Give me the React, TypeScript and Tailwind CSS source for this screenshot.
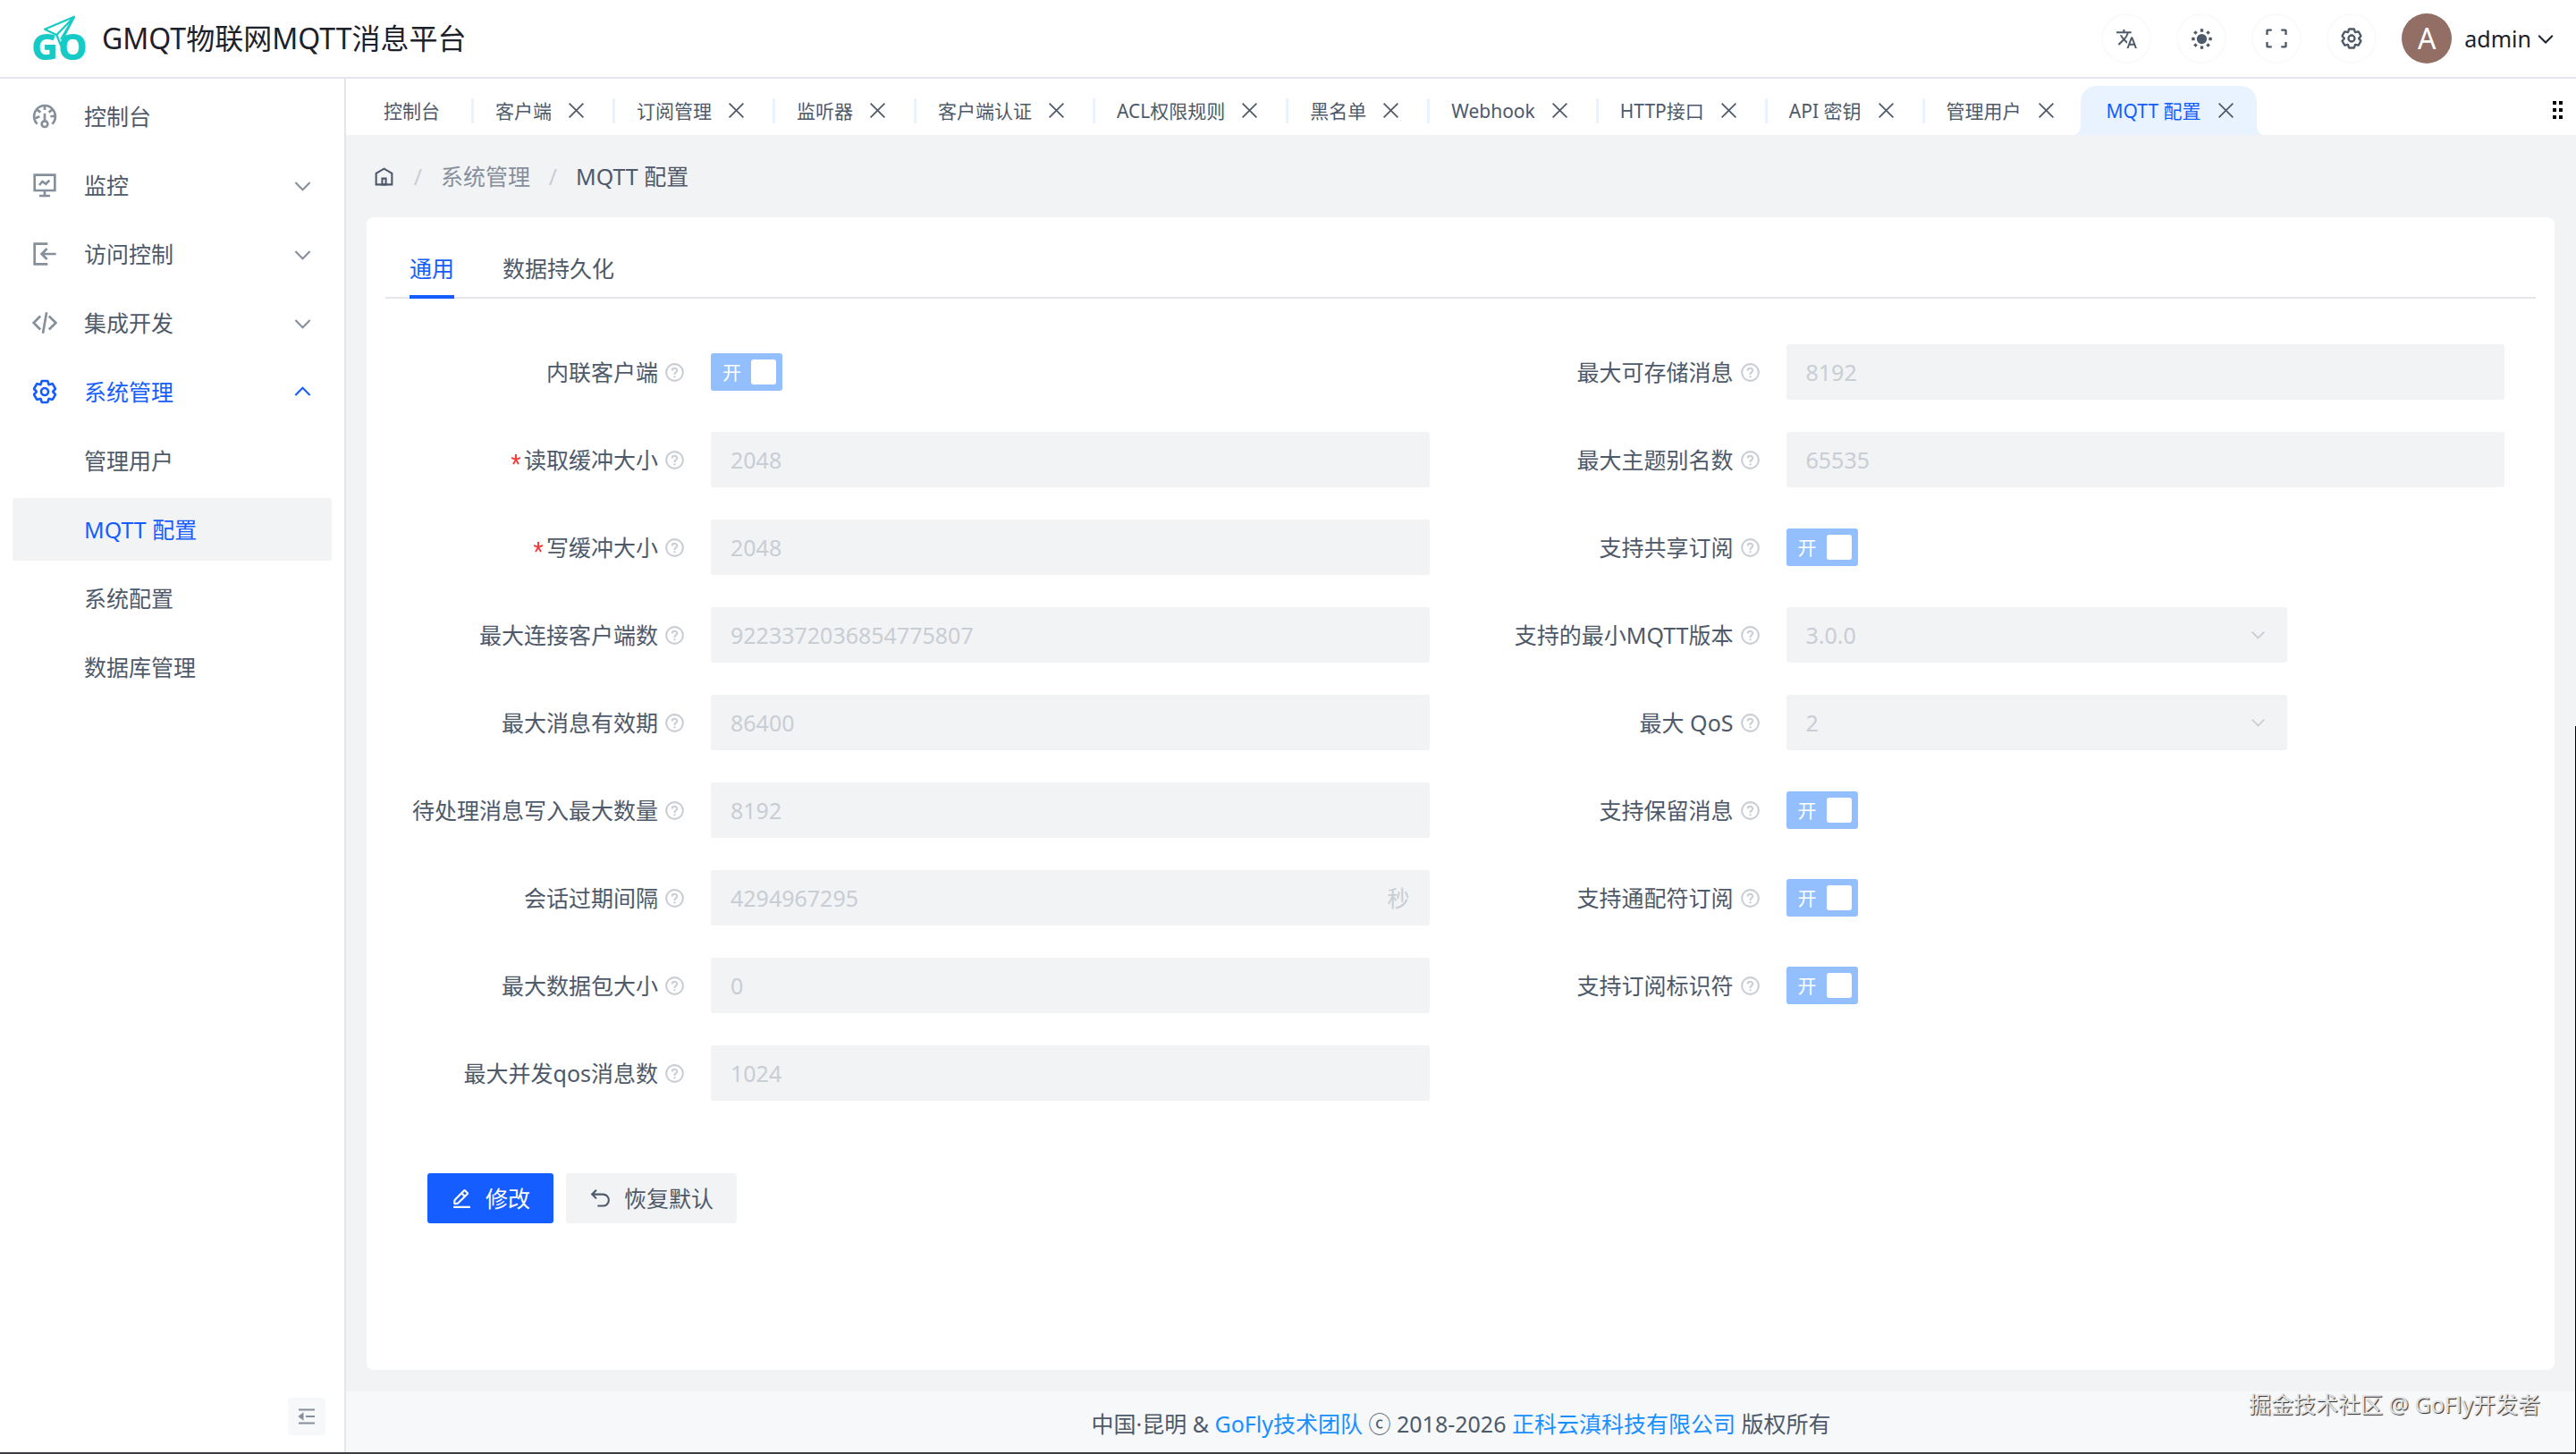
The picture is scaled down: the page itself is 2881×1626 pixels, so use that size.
import { useState, type ReactNode } from 'react'
import { clsx } from 'clsx'
import { MdTranslate } from 'react-icons/md'

type IconProps = { className?: string; children?: ReactNode; strokeWidth?: number }

const Icon = ({ className, children, strokeWidth = 4 }: IconProps) => (
  <svg
    viewBox="0 0 48 48"
    fill="none"
    stroke="currentColor"
    strokeWidth={strokeWidth}
    className={clsx('shrink-0', className)}
    aria-hidden="true"
  >
    {children}
  </svg>
)

const DashboardIcon = ({ className }: IconProps) => (
  <Icon className={className}>
    <path d="M41.808 24c.118 4.63-1.486 9.333-5.21 13m5.21-13h-8.309m8.309 0c-.112-4.38-1.767-8.694-4.627-12M24 6c5.531 0 10.07 2.404 13.18 6M24 6c-5.724 0-10.384 2.574-13.5 6.38M24 6v7.5M37.18 12 31 17.5m-20.5-5.12L17 17.5m-6.5-5.12C6.99 16.662 5.44 22.508 6.53 28m4.872 9c-2.65-2.609-4.226-5.742-4.873-9m0 0 8.97-3.5" />
    <path d="M24 32a5 5 0 1 0 0 10 5 5 0 0 0 0-10Zm0 0V19" />
  </Icon>
)

const MonitorIcon = ({ className }: IconProps) => (
  <Icon className={className}>
    <path d="M24 34v8m0 0h-9m9 0h9M7 7h34v26H7zM15 24l5-6 6 4 6-6" />
  </Icon>
)

const ImportIcon = ({ className }: IconProps) => (
  <Icon className={className}>
    <path d="m27.929 33.072-9.071-9.07 9.07-9.072M43 24H19m10 17H7V7h22" />
  </Icon>
)

const CodeIcon = ({ className }: IconProps) => (
  <Icon className={className}>
    <path d="M16.734 12.686 5.42 24l11.314 11.314m14.521-22.628L42.57 24 31.255 35.314M27.2 6.28l-6.251 35.453" />
  </Icon>
)

const SettingsIcon = ({ className }: IconProps) => (
  <Icon className={className}>
    <path d="M18.797 6.732A1 1 0 0 1 19.76 6h8.48a1 1 0 0 1 .964.732l1.285 4.628a1 1 0 0 0 1.213.7l4.651-1.2a1 1 0 0 1 1.116.468l4.24 7.344a1 1 0 0 1-.153 1.2L38.193 23.3a1 1 0 0 0 0 1.402l3.364 3.427a1 1 0 0 1 .153 1.2l-4.24 7.344a1 1 0 0 1-1.116.468l-4.65-1.2a1 1 0 0 0-1.214.7l-1.285 4.628a1 1 0 0 1-.964.732h-8.48a1 1 0 0 1-.963-.732L17.51 36.64a1 1 0 0 0-1.213-.7l-4.65 1.2a1 1 0 0 1-1.116-.468l-4.24-7.344a1 1 0 0 1 .153-1.2L9.809 24.7a1 1 0 0 0 0-1.402l-3.364-3.427a1 1 0 0 1-.153-1.2l4.24-7.344a1 1 0 0 1 1.116-.468l4.65 1.2a1 1 0 0 0 1.213-.7l1.286-4.628Z" />
    <path d="M30 24a6 6 0 1 1-12 0 6 6 0 0 1 12 0Z" />
  </Icon>
)

const CloseIcon = ({ className }: IconProps) => (
  <Icon className={className}>
    <path d="M6 6l36 36M42 6 6 42" />
  </Icon>
)

const DownIcon = ({ className }: IconProps) => (
  <Icon className={className}>
    <path d="M39.6 17.443 24.043 33 8.487 17.443" />
  </Icon>
)

const HomeIcon = ({ className }: IconProps) => (
  <Icon className={className}>
    <path d="M7 17 24 7l17 10v24H7V17Z" />
    <path d="M20 28h8v13h-8V28Z" />
  </Icon>
)

const HelpIcon = ({ className }: IconProps) => (
  <Icon className={className}>
    <path d="M42 24c0 9.941-8.059 18-18 18S6 33.941 6 24 14.059 6 24 6s18 8.059 18 18Z" />
    <path d="M24.006 31v4.008m0-6.008L24 28c0-3 3-4 4.78-6.402C30.558 19.195 28.288 15 23.987 15c-4.014 0-5.382 2.548-5.388 4.514v.465" />
  </Icon>
)

const FullscreenIcon = ({ className }: IconProps) => (
  <Icon className={className}>
    <path d="M42 17V9a1 1 0 0 0-1-1h-8M6 17V9a1 1 0 0 1 1-1h8m27 23v8a1 1 0 0 1-1 1h-8M6 31v8a1 1 0 0 0 1 1h8" />
  </Icon>
)

const SunIcon = ({ className }: IconProps) => (
  <Icon className={className}>
    <circle cx="24" cy="24" r="10" fill="currentColor" stroke="none" />
    <path strokeWidth="6" d="M24 4v6M24 38v6M4 24h6M38 24h6M9.500 9.500l4 4M34.500 34.500l4 4M9.500 38.500l4-4M34.500 13.500l4-4" />
  </Icon>
)

const EditIcon = ({ className }: IconProps) => (
  <Icon className={className}>
    <path d="m30.48 19.038 5.733-5.734a1 1 0 0 0 0-1.414l-5.586-5.586a1 1 0 0 0-1.414 0l-5.734 5.734m7 7L15.763 33.754a1 1 0 0 1-.59.286l-6.048.708a1 1 0 0 1-1.113-1.069l.477-6.31a1 1 0 0 1 .29-.631l14.7-14.7m7 7-7-7M6 42h36" />
  </Icon>
)

const UndoIcon = ({ className }: IconProps) => (
  <Icon className={className}>
    <path d="m15.322 23.78-9.193-9.193 9.193-9.193M7 14.587h22.500c6.900 0 12.500 5.600 12.500 12.500S36.400 39.500 29.500 39.500H18" />
  </Icon>
)

const FoldIcon = ({ className }: IconProps) => (
  <Icon className={className}>
    <path d="M42 9H6M42 24H22M42 39H6" />
    <path d="M15 29.500 8 24l7-5.500z" fill="currentColor" />
  </Icon>
)

const MoreIcon = ({ className }: IconProps) => (
  <svg viewBox="0 0 12 20" fill="currentColor" className={className} aria-hidden="true">
    <path d="M0 0h4v4H0zM7 0h4v4H7zM0 8h4v4H0zM7 8h4v4H7zM0 16h4v4H0zM7 16h4v4H7z" />
  </svg>
)

const RequiredIcon = ({ className }: IconProps) => (
  <svg viewBox="0 0 10 12" stroke="currentColor" strokeWidth="2" className={className} aria-hidden="true">
    <path d="M5 6V0M5 6l5-2M5 6l3 5M5 6l-3 5M5 6L0 4" />
  </svg>
)

const Logo = () => (
  <svg viewBox="0 0 64 54" className="h-[54px] w-16 shrink-0 overflow-visible" aria-hidden="true">
    <g fill="#16cbc5" fontFamily="'Noto Sans', sans-serif" fontWeight="800" fontSize="41">
      <text x="-1" y="51">G</text>
      <text x="29" y="51">O</text>
    </g>
    <path
      d="M47 2.700 14 16.700l13.300 6.300 4.400 11 5.600-12.500z"
      fill="#fff"
      stroke="#16cbc5"
      strokeWidth="2.200"
      strokeLinejoin="round"
    />
    <path d="M47 2.700 27.300 23M47 2.700 32 28" fill="none" stroke="#16cbc5" strokeWidth="2.200" />
  </svg>
)

const menu = [
  { label: '控制台', icon: DashboardIcon },
  { label: '监控', icon: MonitorIcon, expandable: true },
  { label: '访问控制', icon: ImportIcon, expandable: true },
  { label: '集成开发', icon: CodeIcon, expandable: true },
  {
    label: '系统管理',
    icon: SettingsIcon,
    expandable: true,
    open: true,
    children: ['管理用户', 'MQTT 配置', '系统配置', '数据库管理'],
  },
]

const pages = [
  '控制台',
  '客户端',
  '订阅管理',
  '监听器',
  '客户端认证',
  'ACL权限规则',
  '黑名单',
  'Webhook',
  'HTTP接口',
  'API 密钥',
  '管理用户',
  'MQTT 配置',
]

type Field = {
  id: string
  label: string
  type: 'input' | 'switch' | 'select'
  value?: string
  suffix?: string
  required?: boolean
}

const leftFields: Field[] = [
  { id: 'inline_client', label: '内联客户端', type: 'switch' },
  { id: 'read_buffer', label: '读取缓冲大小', type: 'input', value: '2048', required: true },
  { id: 'write_buffer', label: '写缓冲大小', type: 'input', value: '2048', required: true },
  { id: 'max_clients', label: '最大连接客户端数', type: 'input', value: '9223372036854775807' },
  { id: 'message_expiry', label: '最大消息有效期', type: 'input', value: '86400' },
  { id: 'pending_writes', label: '待处理消息写入最大数量', type: 'input', value: '8192' },
  { id: 'session_expiry', label: '会话过期间隔', type: 'input', value: '4294967295', suffix: '秒' },
  { id: 'packet_size', label: '最大数据包大小', type: 'input', value: '0' },
  { id: 'inflight', label: '最大并发qos消息数', type: 'input', value: '1024' },
]

const rightFields: Field[] = [
  { id: 'max_stored', label: '最大可存储消息', type: 'input', value: '8192' },
  { id: 'topic_alias', label: '最大主题别名数', type: 'input', value: '65535' },
  { id: 'shared_sub', label: '支持共享订阅', type: 'switch' },
  { id: 'min_version', label: '支持的最小MQTT版本', type: 'select', value: '3.0.0' },
  { id: 'max_qos', label: '最大 QoS', type: 'select', value: '2' },
  { id: 'retain', label: '支持保留消息', type: 'switch' },
  { id: 'wildcard_sub', label: '支持通配符订阅', type: 'switch' },
  { id: 'sub_id', label: '支持订阅标识符', type: 'switch' },
]

const Switch = ({ id }: { id: string }) => (
  <span className="relative flex h-[42px] w-20 items-center justify-between rounded-[3px] bg-[#94bfff] pr-[7px] pl-[13px]">
    <span className="text-[21px] leading-7 text-white">开</span>
    <span className="size-7 rounded-[3px] bg-white" />
    <input id={id} type="checkbox" defaultChecked disabled className="absolute inset-0 opacity-0" />
  </span>
)

const FieldRow = ({ field }: { field: Field }) => (
  <div className="flex h-[62px] items-center">
    <label htmlFor={field.id} className="flex w-[364px] shrink-0 items-center justify-end pr-7 text-[#4e5969]">
      {field.required && <RequiredIcon className="mr-1 h-3 w-[10px] text-[#f53f3f]" />}
      <span className="whitespace-nowrap">{field.label}</span>
      <HelpIcon className="ml-[6px] size-[25px] text-[#c9cdd4]" />
    </label>

    {field.type === 'switch' && <Switch id={field.id} />}

    {field.type === 'input' && (
      <div className="flex h-full flex-1 items-center rounded-[3px] bg-[#f2f3f5] px-[22px] text-[#c9cdd4]">
        <input id={field.id} defaultValue={field.value} disabled className="min-w-0 flex-1 bg-transparent" />
        {field.suffix && <span>{field.suffix}</span>}
      </div>
    )}

    {field.type === 'select' && (
      <div className="relative h-full w-[560px]">
        <select
          id={field.id}
          disabled
          className="h-full w-full appearance-none rounded-[3px] bg-[#f2f3f5] px-[22px] text-[#c9cdd4] opacity-100"
        >
          <option>{field.value}</option>
        </select>
        <DownIcon className="absolute top-5 right-[22px] size-[21px] text-[#c9cdd4]" />
      </div>
    )}
  </div>
)

const Header = () => (
  <header className="flex h-[88px] items-center border-b-2 border-[#e5e6eb] bg-white pr-[22px] pl-9 text-[#1d2129]">
    <Logo />
    <h1 className="ml-[14px] text-[32px] leading-10">GMQT物联网MQTT消息平台</h1>

    <div className="ml-auto flex items-center gap-7 text-[#4e5969]">
      {[
        { label: '语言', icon: <MdTranslate className="size-[25px]" /> },
        { label: '主题', icon: <SunIcon className="size-[27px]" /> },
        { label: '全屏', icon: <FullscreenIcon className="size-7" /> },
        { label: '设置', icon: <SettingsIcon className="size-7" /> },
      ].map((item) => (
        <button
          key={item.label}
          aria-label={item.label}
          className="flex size-14 items-center justify-center rounded-full border-2 border-[#f9fafb]"
        >
          {item.icon}
        </button>
      ))}

      <button className="flex items-center text-[#1d2129]">
        <span className="flex size-14 items-center justify-center rounded-full bg-[#926e65] text-[32px] text-white">
          A
        </span>
        <span className="ml-[14px]">admin</span>
        <DownIcon className="ml-1 size-6" />
      </button>
    </div>
  </header>
)

const Sidebar = () => (
  <aside className="relative w-[387px] shrink-0 border-r-2 border-[#e5e6eb] bg-white">
    <nav className="flex flex-col gap-[7px] px-[14px] pt-[7px]">
      {menu.map(({ label, icon: ItemIcon, expandable, open, children }) => (
        <div key={label} className="flex flex-col gap-[7px]">
          <button className={clsx('flex h-[70px] items-center pr-5 pl-5', open ? 'text-[#165dff]' : 'text-[#86909c]')}>
            <ItemIcon className="size-8" />
            <span className={clsx('ml-7', !open && 'text-[#4e5969]')}>{label}</span>
            {expandable && <DownIcon className={clsx('ml-auto size-[25px]', open && 'rotate-180')} />}
          </button>
          {children?.map((child) => (
            <a
              key={child}
              href="#"
              className={clsx(
                'flex h-[70px] items-center rounded-[3px] pl-20',
                child === 'MQTT 配置' ? 'bg-[#f2f3f5] text-[#165dff]' : 'text-[#4e5969]',
              )}
            >
              {child}
            </a>
          ))}
        </div>
      ))}
    </nav>
    <button
      aria-label="收起菜单"
      className="absolute right-[21px] bottom-[19px] flex size-[42px] items-center justify-center rounded-[3px] bg-[#f7f8fa] text-[#86909c]"
    >
      <FoldIcon className="size-6" />
    </button>
  </aside>
)

/* open pages; the active one is drawn as a browser-like tab with flared feet */
const PageTabs = () => {
  const last = pages.length - 1

  return (
    <div className="flex h-[63px] items-end bg-white pl-[18px] text-[21px] text-[#4e5969]">
      {pages.map((page, i) => (
        <div
          key={page}
          className={clsx(
            'relative flex h-[55px] items-center whitespace-nowrap',
            i === 0 && 'pr-[38px] pl-6',
            i > 0 && i < last - 1 && 'pr-[33px] pl-6',
            i === last - 1 && 'pr-7 pl-6',
            i === last && 'rounded-t-[18px] bg-[#e8f3ff] pr-6 pl-[29px]',
          )}
        >
          <a href="#" className={clsx(i === last && 'text-[#165dff]')}>{page}</a>
          {i > 0 && (
            <button aria-label={`关闭${page}`} className="ml-[17px]">
              <CloseIcon className="size-[21px]" />
            </button>
          )}
          {i < last - 1 && <span className="absolute top-[14px] right-0 h-7 w-[3px] bg-[#e8f3ff]" />}
          {i === last && (
            <>
              <svg viewBox="0 0 8 12" className="absolute bottom-0 -left-2 h-3 w-2 fill-[#e8f3ff]" aria-hidden="true">
                <path d="M8 0v12H0c5 0 8-5 8-12z" />
              </svg>
              <svg viewBox="0 0 8 12" className="absolute -right-2 bottom-0 h-3 w-2 fill-[#e8f3ff]" aria-hidden="true">
                <path d="M0 0v12h8C3 12 0 7 0 0z" />
              </svg>
            </>
          )}
        </div>
      ))}
      <button aria-label="更多" className="mr-[14px] mb-[18px] ml-auto text-black">
        <MoreIcon className="h-5 w-3" />
      </button>
    </div>
  )
}

const Breadcrumb = () => (
  <nav className="flex h-[92px] items-center px-[30px] text-[#86909c]">
    <a href="#" aria-label="首页">
      <HomeIcon className="size-[25px] text-[#4e5969]" />
    </a>
    <span className="w-[51px] text-center text-[#c9cdd4]">/</span>
    <a href="#">系统管理</a>
    <span className="w-[51px] text-center text-[#c9cdd4]">/</span>
    <span className="text-[#4e5969]">MQTT 配置</span>
  </nav>
)

const ConfigCard = () => {
  const [tab, setTab] = useState('通用')

  return (
    <section className="mr-6 ml-[23px] flex-1 rounded-lg bg-white px-[21px] pt-[26px]">
      <div className="flex gap-[54px] border-b-2 border-[#e5e6eb] px-[27px]">
        {['通用', '数据持久化'].map((name) => (
          <button
            key={name}
            onClick={() => setTab(name)}
            className={clsx(
              '-mb-[2px] h-[65px] border-b-4',
              tab === name ? 'border-[#165dff] text-[#165dff]' : 'border-transparent text-[#4e5969]',
            )}
          >
            {name}
          </button>
        ))}
      </div>

      <form>
        <div className="grid grid-cols-2 pt-[51px]">
          {[leftFields, rightFields].map((fields, i) => (
            <div key={i} className="flex flex-col gap-9 pr-[35px]">
              {fields.map((field) => (
                <FieldRow key={field.id} field={field} />
              ))}
            </div>
          ))}
        </div>

        <div className="mt-[81px] flex gap-[14px] pl-[47px]">
          <button type="button" className="flex h-14 items-center gap-[14px] rounded-[3px] bg-[#165dff] px-[26px] text-white">
            <EditIcon className="size-[25px]" />
            修改
          </button>
          <button type="button" className="flex h-14 items-center gap-[14px] rounded-[3px] bg-[#f2f3f5] px-[26px] text-[#4e5969]">
            <UndoIcon className="size-[25px]" />
            恢复默认
          </button>
        </div>
      </form>
    </section>
  )
}

const Footer = () => (
  <footer className="relative mt-6 flex h-[68px] items-center justify-center bg-[#f7f8fa] pt-1 text-[#4e5969]">
    <p>
      中国·昆明 & <a href="#" className="text-[#1890ff]">GoFly技术团队</a> ⓒ 2018-2026{' '}
      <a href="#" className="text-[#1890ff]">正科云滇科技有限公司</a> 版权所有
    </p>
    <span className="absolute top-0 right-10 leading-7 text-[#e2e3e5] [text-shadow:1px_1px_1px_#222]">
      掘金技术社区 @ GoFly开发者
    </span>
  </footer>
)

const App = () => (
  <div
    lang="zh-CN"
    className="relative flex min-h-screen flex-col border-b-2 border-[#3c3d40] bg-[#f2f3f5] font-['Noto_Sans','Noto_Sans_CJK_SC',sans-serif] text-[25px] leading-9"
  >
    <Header />
    <div className="flex flex-1">
      <Sidebar />
      <main className="flex min-w-0 flex-1 flex-col">
        <PageTabs />
        <Breadcrumb />
        <ConfigCard />
        <Footer />
      </main>
    </div>
    <div className="absolute right-0 bottom-0 h-1/2 w-px bg-black" />
  </div>
)

export default App
